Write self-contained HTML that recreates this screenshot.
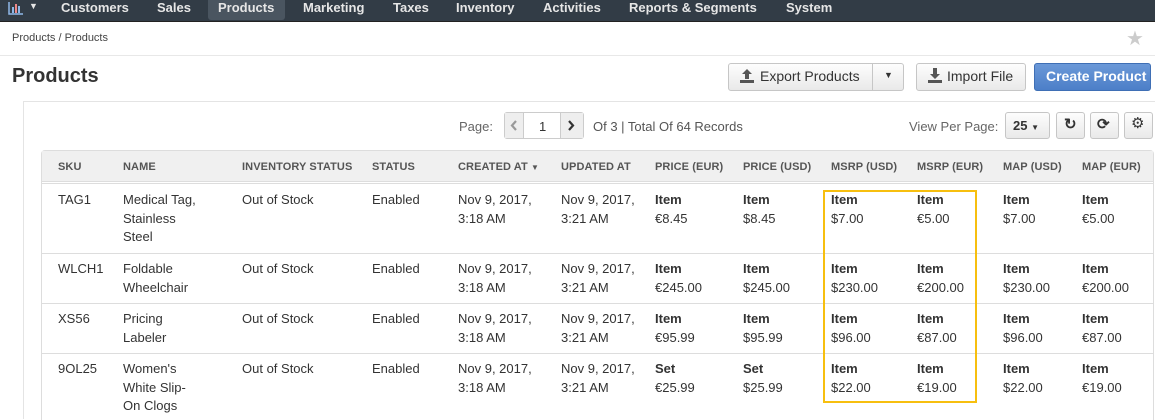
<!DOCTYPE html>
<html><head><meta charset="utf-8"><style>
*{margin:0;padding:0;box-sizing:border-box}
body{width:1155px;height:419px;overflow:hidden;background:#fff;font-family:"Liberation Sans",Arial,sans-serif;color:#333;position:relative}
.a{position:absolute;white-space:nowrap}
.nav{position:absolute;left:0;top:0;width:1155px;height:22px;background:#323c46;border-bottom:1px solid #222}
.nav span{position:absolute;top:0px;color:#e6e6e6;font-weight:bold;font-size:13px}
.btn{position:absolute;border:1px solid #c6c6c6;border-radius:3px;background:linear-gradient(#fdfdfd,#e9e9e9);font-size:14px;color:#333}
.th{position:absolute;top:161px;font-size:11px;font-weight:bold;color:#555;letter-spacing:.1px}
.c{position:absolute;font-size:13px;line-height:18.7px;color:#333}
.c b{color:#333}
.hl{position:absolute;left:41px;width:1112px;height:1px;background:#ddd}
</style></head><body>
<div class="nav">
<svg class="a" style="left:8px;top:1px" width="16" height="14" viewBox="0 0 16 14"><path d="M1 1v12h14" stroke="#8fb8e8" stroke-width="1.5" fill="none"/><rect x="4" y="6" width="2" height="6" fill="#8fb8e8"/><rect x="7" y="3" width="2" height="9" fill="#e88"/><rect x="10" y="5" width="2" height="7" fill="#8fb8e8"/></svg>
<span style="left:29px;top:1px;font-size:9px">▼</span>
<span style="left:61px">Customers</span><span style="left:157px">Sales</span>
<div class="a" style="left:208px;top:0;width:77px;height:20px;background:#4a5560;border-radius:0 0 3px 3px"></div>
<span style="left:218px">Products</span><span style="left:303px">Marketing</span><span style="left:393px">Taxes</span><span style="left:456px">Inventory</span><span style="left:543px">Activities</span><span style="left:629px">Reports &amp; Segments</span><span style="left:786px">System</span>
</div>
<div class="a" style="left:12px;top:32px;font-size:11px;color:#444">Products / Products</div>
<div class="a" style="left:1126px;top:26px;font-size:20px;color:#ccc">★</div>
<div class="a" style="left:0;top:55px;width:1155px;height:1px;background:#e8e8e8"></div>
<div class="a" style="left:12px;top:65px;font-size:20px;font-weight:bold;color:#333">Products</div>
<div class="btn" style="left:728px;top:63px;width:176px;height:28px"></div>
<div class="a" style="left:872px;top:64px;width:1px;height:26px;background:#c6c6c6"></div>
<svg class="a" style="left:740px;top:68px" width="14" height="15" viewBox="0 0 14 15"><path d="M7 1l-5 5h3v5h4V6h3z M0 12v3h14v-3z" fill="#555"/></svg>
<div class="a" style="left:760px;top:68px;font-size:14px">Export Products</div>
<div class="a" style="left:884px;top:70px;font-size:9px">▼</div>
<div class="btn" style="left:916px;top:63px;width:110px;height:28px"></div>
<svg class="a" style="left:928px;top:68px" width="14" height="15" viewBox="0 0 14 15"><path d="M5 0h4v6h3l-5 5-5-5h3z M0 12v3h14v-3z" fill="#555"/></svg>
<div class="a" style="left:947px;top:68px;font-size:14px">Import File</div>
<div class="a" style="left:1034px;top:63px;width:117px;height:28px;border-radius:3px;background:linear-gradient(#6b99d8,#4c7fc8);border:1px solid #3f6fb5"></div>
<div class="a" style="left:1046px;top:68px;font-size:14px;color:#fff;font-weight:bold">Create Product</div>
<div class="a" style="left:23px;top:101px;width:1132px;height:318px;border-left:1px solid #e4e4e4;border-top:1px solid #e4e4e4"></div>
<div class="a" style="left:459px;top:119px;font-size:13px;color:#666">Page:</div>
<div class="a" style="left:504px;top:112px;width:80px;height:27px;border:1px solid #ccc;border-radius:3px;background:#fff"></div>
<div class="a" style="left:505px;top:113px;width:19px;height:25px;background:#eee;border-right:1px solid #ccc"></div>
<div class="a" style="left:560px;top:113px;width:23px;height:25px;background:#eee;border-left:1px solid #ccc"></div>
<svg class="a" style="left:510px;top:120px" width="8" height="11" viewBox="0 0 8 11"><path d="M6 1L2 5.5 6 10" stroke="#999" stroke-width="2.2" fill="none"/></svg>
<svg class="a" style="left:567px;top:120px" width="8" height="11" viewBox="0 0 8 11"><path d="M2 1l4 4.5L2 10" stroke="#333" stroke-width="2.2" fill="none"/></svg>
<div class="a" style="left:539px;top:119px;font-size:13px">1</div>
<div class="a" style="left:593px;top:119px;font-size:13px;color:#555">Of 3 | Total Of 64 Records</div>
<div class="a" style="left:909px;top:119px;font-size:13px;color:#666">View Per Page:</div>
<div class="btn" style="left:1005px;top:112px;width:45px;height:27px"></div>
<div class="a" style="left:1013px;top:118px;font-size:13px;font-weight:bold">25 <span style="font-size:8px">▼</span></div>
<div class="btn" style="left:1056px;top:112px;width:29px;height:27px"></div>
<div class="a" style="left:1064px;top:115px;font-size:15px;font-weight:bold">↻</div>
<div class="btn" style="left:1090px;top:112px;width:29px;height:27px"></div>
<div class="a" style="left:1097px;top:115px;font-size:15px;font-weight:bold">⟳</div>
<div class="btn" style="left:1124px;top:112px;width:29px;height:27px"></div>
<div class="a" style="left:1131px;top:114px;font-size:15px">⚙</div>
<div class="a" style="left:41px;top:150px;width:1113px;height:270px;border:1px solid #ddd;border-radius:4px 4px 0 0;border-bottom:none"></div>
<div class="a" style="left:42px;top:151px;width:1111px;height:30px;background:#f0f0f0"></div>
<div class="hl" style="top:181px"></div><div class="hl" style="top:183px"></div>
<div class="hl" style="top:253px"></div><div class="hl" style="top:303px"></div><div class="hl" style="top:353px"></div>
<div class="th" style="left:58px">SKU</div><div class="th" style="left:123px">NAME</div><div class="th" style="left:242px">INVENTORY STATUS</div><div class="th" style="left:372px">STATUS</div><div class="th" style="left:458px">CREATED AT <span style="font-size:8px">▼</span></div><div class="th" style="left:561px">UPDATED AT</div><div class="th" style="left:655px">PRICE (EUR)</div><div class="th" style="left:743px">PRICE (USD)</div><div class="th" style="left:831px">MSRP (USD)</div><div class="th" style="left:917px">MSRP (EUR)</div><div class="th" style="left:1003px">MAP (USD)</div><div class="th" style="left:1082px">MAP (EUR)</div>

<div class="c" style="left:58px;top:191px">TAG1</div><div class="c" style="left:123px;top:191px">Medical Tag,<br>Stainless<br>Steel</div><div class="c" style="left:242px;top:191px">Out of Stock</div><div class="c" style="left:372px;top:191px">Enabled</div><div class="c" style="left:458px;top:191px">Nov 9, 2017,<br>3:18 AM</div><div class="c" style="left:561px;top:191px">Nov 9, 2017,<br>3:21 AM</div><div class="c" style="left:655px;top:191px"><b>Item</b><br>€8.45</div><div class="c" style="left:743px;top:191px"><b>Item</b><br>$8.45</div><div class="c" style="left:831px;top:191px"><b>Item</b><br>$7.00</div><div class="c" style="left:917px;top:191px"><b>Item</b><br>€5.00</div><div class="c" style="left:1003px;top:191px"><b>Item</b><br>$7.00</div><div class="c" style="left:1082px;top:191px"><b>Item</b><br>€5.00</div>

<div class="c" style="left:58px;top:260px">WLCH1</div><div class="c" style="left:123px;top:260px">Foldable<br>Wheelchair</div><div class="c" style="left:242px;top:260px">Out of Stock</div><div class="c" style="left:372px;top:260px">Enabled</div><div class="c" style="left:458px;top:260px">Nov 9, 2017,<br>3:18 AM</div><div class="c" style="left:561px;top:260px">Nov 9, 2017,<br>3:21 AM</div><div class="c" style="left:655px;top:260px"><b>Item</b><br>€245.00</div><div class="c" style="left:743px;top:260px"><b>Item</b><br>$245.00</div><div class="c" style="left:831px;top:260px"><b>Item</b><br>$230.00</div><div class="c" style="left:917px;top:260px"><b>Item</b><br>€200.00</div><div class="c" style="left:1003px;top:260px"><b>Item</b><br>$230.00</div><div class="c" style="left:1082px;top:260px"><b>Item</b><br>€200.00</div>

<div class="c" style="left:58px;top:310px">XS56</div><div class="c" style="left:123px;top:310px">Pricing<br>Labeler</div><div class="c" style="left:242px;top:310px">Out of Stock</div><div class="c" style="left:372px;top:310px">Enabled</div><div class="c" style="left:458px;top:310px">Nov 9, 2017,<br>3:18 AM</div><div class="c" style="left:561px;top:310px">Nov 9, 2017,<br>3:21 AM</div><div class="c" style="left:655px;top:310px"><b>Item</b><br>€95.99</div><div class="c" style="left:743px;top:310px"><b>Item</b><br>$95.99</div><div class="c" style="left:831px;top:310px"><b>Item</b><br>$96.00</div><div class="c" style="left:917px;top:310px"><b>Item</b><br>€87.00</div><div class="c" style="left:1003px;top:310px"><b>Item</b><br>$96.00</div><div class="c" style="left:1082px;top:310px"><b>Item</b><br>€87.00</div>

<div class="c" style="left:58px;top:360px">9OL25</div><div class="c" style="left:123px;top:360px">Women's<br>White Slip-<br>On Clogs</div><div class="c" style="left:242px;top:360px">Out of Stock</div><div class="c" style="left:372px;top:360px">Enabled</div><div class="c" style="left:458px;top:360px">Nov 9, 2017,<br>3:18 AM</div><div class="c" style="left:561px;top:360px">Nov 9, 2017,<br>3:21 AM</div><div class="c" style="left:655px;top:360px"><b>Set</b><br>€25.99</div><div class="c" style="left:743px;top:360px"><b>Set</b><br>$25.99</div><div class="c" style="left:831px;top:360px"><b>Item</b><br>$22.00</div><div class="c" style="left:917px;top:360px"><b>Item</b><br>€19.00</div><div class="c" style="left:1003px;top:360px"><b>Item</b><br>$22.00</div><div class="c" style="left:1082px;top:360px"><b>Item</b><br>€19.00</div>

<div class="a" style="left:823px;top:190px;width:154px;height:213px;border:2px solid #f7bf0f"></div>
</body></html>
